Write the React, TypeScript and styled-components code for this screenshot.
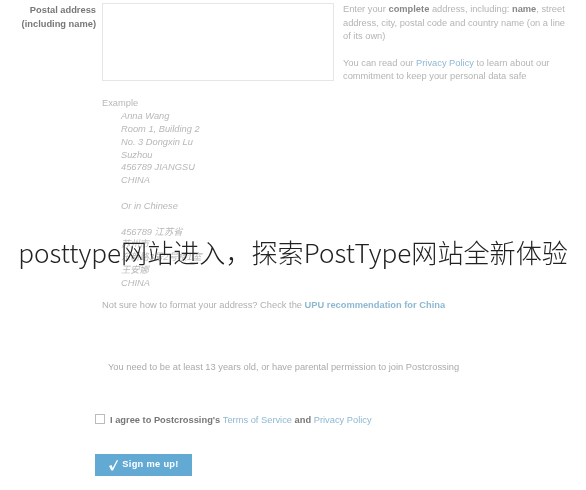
import React, { FC } from 'react';
import styled, { createGlobalStyle } from 'styled-components';

const GlobalStyle = createGlobalStyle`
    html, body {
        margin: 0;
        padding: 0;
        background: #fff;
    }
`;

const Page = styled.div`
    position: relative;
    width: 586px;
    height: 490px;
    overflow: hidden;
    padding-top: 3px;
    box-sizing: border-box;
    font-family: 'Liberation Sans', 'Noto Sans CJK SC', sans-serif;
    font-size: 9.3px;
    line-height: 13px;
    color: #aaa;
    filter: blur(0.45px);
`;

const FormRow = styled.div`
    display: flex;
    align-items: flex-start;
    height: 78px;
`;

const Label = styled.label`
    width: 96px;
    margin-right: 6px;
    text-align: right;
    font-weight: 700;
    line-height: 14px;
    color: #777;
`;

const AddressBox = styled.div`
    width: 230px;
    height: 76px;
    border: 1px solid #e6e6e6;
    background: #fff;
`;

const Help = styled.div`
    width: 229px;
    margin-left: 9px;
    line-height: 13.5px;
    color: #b4b4b4;

    p {
        margin: 0 0 13px;
    }

    p:last-child {
        margin-bottom: 0;
    }

    strong {
        color: #888;
    }
`;

const Link = styled.a<{ $bold?: boolean }>`
    color: #8db8d2;
    font-weight: ${({ $bold }) => ($bold ? 700 : 400)};
`;

const ExampleBlock = styled.div`
    margin: 16px 0 0 102px;
    color: #b8b8b8;
`;

const Address = styled.div`
    margin-left: 19px;
    font-style: italic;
`;

const AddressLine = styled.div`
    height: 12.85px;
    line-height: 12.85px;
    white-space: nowrap;
`;

const FormatHint = styled.div`
    margin: 9px 0 0 102px;
    color: #b0b0b0;
`;

const AgeNote = styled.div`
    margin: 49px 0 0 108px;
    color: #aaa;
`;

const AgreeRow = styled.div`
    display: flex;
    align-items: center;
    margin: 40px 0 0 95px;
    font-weight: 700;
    color: #777;
`;

const Checkbox = styled.span`
    width: 8px;
    height: 8px;
    margin: -2px 5px 0 0;
    border: 1px solid #bbb;
    background: #fff;
`;

const SignUp = styled.div`
    display: flex;
    align-items: center;
    justify-content: center;
    gap: 3px;
    width: 97px;
    height: 22px;
    margin: 27px 0 0 95px;
    background: #62a9d3;
    color: #fff;
    font-size: 9.3px;
    font-weight: 700;
    letter-spacing: 0.3px;
`;

const Banner = styled.div`
    position: absolute;
    left: 0;
    right: 0;
    top: 234px;
    text-align: center;
    white-space: nowrap;
    font-family: 'Noto Sans CJK SC', 'Noto Sans', sans-serif;
    font-size: 26.1px;
    line-height: 36px;
    font-weight: 300;
    color: #222;
`;

const addressLines = [
    'Anna Wang',
    'Room 1, Building 2',
    'No. 3 Dongxin Lu',
    'Suzhou',
    '456789 JIANGSU',
    'CHINA',
    '',
    'Or in Chinese',
    '',
    '456789 江苏省',
    '苏州市',
    '东新路3号2号楼1室',
    '王安娜',
    'CHINA',
];

const App: FC = () => (
    <Page>
        <GlobalStyle />
        <FormRow>
            <Label>
                Postal address
                <br />
                (including name)
            </Label>
            <AddressBox />
            <Help>
                <p>
                    Enter your <strong>complete</strong> address, including: <strong>name</strong>, street address,
                    city, postal code and country name (on a line of its own)
                </p>
                <p>
                    You can read our <Link>Privacy Policy</Link> to learn about our commitment to keep your personal
                    data safe
                </p>
            </Help>
        </FormRow>
        <ExampleBlock>
            Example
            <Address>
                {addressLines.map((line, i) => (
                    <AddressLine key={i}>{line}</AddressLine>
                ))}
            </Address>
        </ExampleBlock>
        <FormatHint>
            Not sure how to format your address? Check the <Link $bold>UPU recommendation for China</Link>
        </FormatHint>
        <AgeNote>You need to be at least 13 years old, or have parental permission to join Postcrossing</AgeNote>
        <AgreeRow>
            <Checkbox />
            <span>
                I agree to Postcrossing's <Link>Terms of Service</Link> and <Link>Privacy Policy</Link>
            </span>
        </AgreeRow>
        <SignUp>
            <svg width="11" height="12" viewBox="0 0 11 12">
                <path d="M1 7 L3.6 6 L4.6 9 L9 0.8 L10 1.4 L5 11.5 L3.4 11.5 Z" fill="#fff" />
            </svg>
            Sign me up!
        </SignUp>
        <Banner>posttype网站进入，探索PostType网站全新体验</Banner>
    </Page>
);

export default App;
